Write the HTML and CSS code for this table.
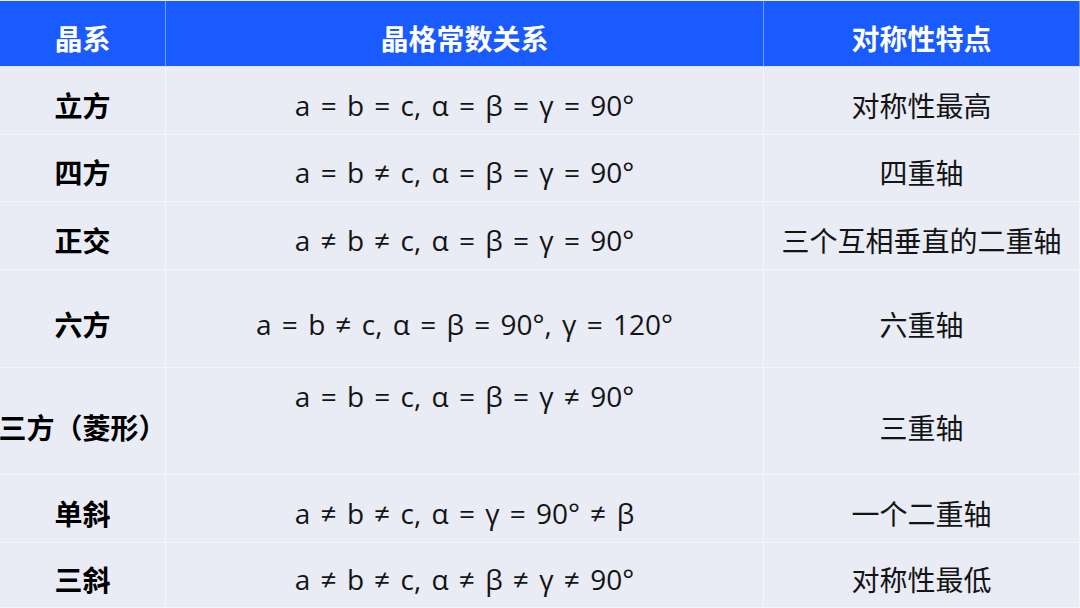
FILE: index.html
```html
<!DOCTYPE html>
<html lang="zh">
<head>
<meta charset="utf-8">
<link rel="stylesheet" href="styles.css">
</head>
<body>
<div class="table">
  <div class="cell head">晶系</div>
  <div class="cell head">晶格常数关系</div>
  <div class="cell head">对称性特点</div>

  <div class="cell sys r1">立方</div>
  <div class="cell rel r1">a = b = c, α = β = γ = 90°</div>
  <div class="cell feat r1">对称性最高</div>

  <div class="cell sys r2">四方</div>
  <div class="cell rel r2">a = b ≠ c, α = β = γ = 90°</div>
  <div class="cell feat r2">四重轴</div>

  <div class="cell sys r3">正交</div>
  <div class="cell rel r3">a ≠ b ≠ c, α = β = γ = 90°</div>
  <div class="cell feat r3">三个互相垂直的二重轴</div>

  <div class="cell sys r4">六方</div>
  <div class="cell rel r4">a = b ≠ c, α = β = 90°, γ = 120°</div>
  <div class="cell feat r4">六重轴</div>

  <div class="cell sys r5">三方（菱形）</div>
  <div class="cell rel r5 top">a = b = c, α = β = γ ≠ 90°</div>
  <div class="cell feat r5">三重轴</div>

  <div class="cell sys r6">单斜</div>
  <div class="cell rel r6">a ≠ b ≠ c, α = γ = 90° ≠ β</div>
  <div class="cell feat r6">一个二重轴</div>

  <div class="cell sys r7">三斜</div>
  <div class="cell rel r7">a ≠ b ≠ c, α ≠ β ≠ γ ≠ 90°</div>
  <div class="cell feat r7">对称性最低</div>
</div>
</body>
</html>
```

FILE: styles.css
```css
html, body {
  margin: 0;
  padding: 0;
  background: #e9ebf5;
}

.table {
  width: 1080px;
  height: 608px;
  box-sizing: border-box;
  border-top: 1px solid rgba(255, 255, 255, 0.45);
  display: grid;
  grid-template-columns: 166px 598px 316px;
  grid-template-rows: 66px 68px 67px 68px 98px 107px 68px 65px;
  font-family: "Open Sans", "Noto Sans CJK SC", sans-serif;
  color: #141414;
  overflow: hidden;
}

.cell {
  box-sizing: border-box;
  border-right: 1px solid rgba(255, 255, 255, 0.55);
  border-bottom: 1px solid rgba(255, 255, 255, 0.55);
  background: #e9ebf5;
  display: flex;
  align-items: center;
  justify-content: center;
  padding-top: 9px;
  white-space: nowrap;
  font-size: 28px;
  line-height: 1.3;
}

.head {
  background: #1a5bff;
  color: #ffffff;
  font-family: "Noto Sans CJK SC", sans-serif;
  font-weight: 700;
  border-right-color: rgba(255, 255, 255, 0.4);
  border-bottom-color: rgba(255, 255, 255, 0.85);
  padding-top: 10px;
}

.sys {
  font-family: "Noto Sans CJK SC", sans-serif;
  font-weight: 700;
  color: #000;
}

.feat {
  font-family: "Noto Sans CJK SC", sans-serif;
  font-weight: 400;
}

.rel {
  font-size: 28px;
  word-spacing: 3px;
}

.r4 {
  padding-top: 12px;
}

.r5 {
  padding-top: 13px;
}

.rel.top {
  align-items: flex-start;
  padding-top: 10px;
}
```
